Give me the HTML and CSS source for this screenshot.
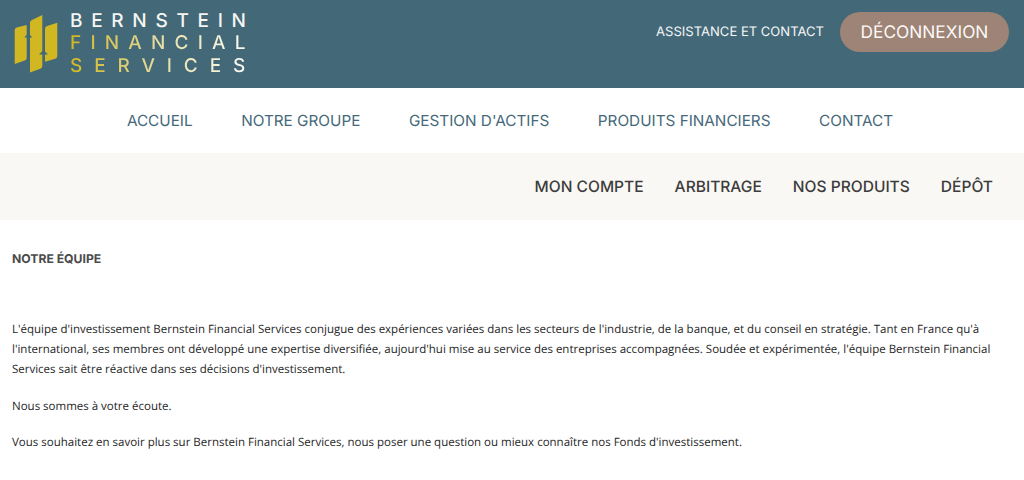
FILE: index.html
```html
<!DOCTYPE html>
<html lang="fr">
<head>
<meta charset="utf-8">
<title>Bernstein Financial Services</title>
<link rel="stylesheet" href="styles.css">
</head>
<body>
<header class="topbar">
  <a class="logo" href="#">
    <svg class="logo-mark" width="44" height="58" viewBox="0 0 44 58">
      <path class="bar" d="M.7 15 Q.7 13 2.700 12.400 L12.700 10 V43 Q12.700 45 10.700 45.600 L.7 49 Z"/>
      <path class="bar" d="M16 7.500 Q16 5.700 18 5 L28.300 0 V51 Q28.300 53 26.300 53.800 L16 57.500 Z"/>
      <path class="bar" d="M31 13.500 Q31 11.700 33 11 L43.300 7.700 V41 Q43.300 43 41.300 43.700 L31 46.700 Z"/>
      <path class="arrow" d="M14.300 18 L10.300 22.500 H18.300 Z"/>
      <path class="arrow" d="M29.500 35 L25 39.500 H34 Z"/>
    </svg>
    <span class="logo-text">
      <span class="logo-line logo-first">BERNSTEIN</span>
      <span class="logo-line logo-second">FINANCIAL</span>
      <span class="logo-line logo-third">SERVICES</span>
    </span>
  </a>
  <div class="top-actions">
    <a class="assist" href="#">ASSISTANCE ET CONTACT</a>
    <a class="logout" href="#">DÉCONNEXION</a>
  </div>
</header>
<nav class="mainnav">
  <a href="#">ACCUEIL</a>
  <a href="#">NOTRE GROUPE</a>
  <a href="#">GESTION D'ACTIFS</a>
  <a href="#">PRODUITS FINANCIERS</a>
  <a href="#">CONTACT</a>
</nav>
<nav class="subnav">
  <a href="#">MON COMPTE</a>
  <a href="#">ARBITRAGE</a>
  <a href="#">NOS PRODUITS</a>
  <a href="#">DÉPÔT</a>
</nav>
<main class="content">
  <h1>NOTRE ÉQUIPE</h1>
  <p>L'équipe d'investissement Bernstein Financial Services conjugue des expériences variées dans les secteurs de l'industrie, de la banque, et du conseil en stratégie. Tant en France qu'à l'international, ses membres ont développé une expertise diversifiée, aujourd'hui mise au service des entreprises accompagnées. Soudée et expérimentée, l'équipe Bernstein Financial Services sait être réactive dans ses décisions d'investissement.</p>
  <p>Nous sommes à votre écoute.</p>
  <p>Vous souhaitez en savoir plus sur Bernstein Financial Services, nous poser une question ou mieux connaître nos Fonds d'investissement.</p>
</main>
</body>
</html>
```

FILE: styles.css
```css
* { box-sizing: border-box; }
html, body { margin: 0; padding: 0; }
body { background: #fff; font-family: "Open Sans", "Noto Sans", sans-serif; color: #2e2e2e; overflow: hidden; text-rendering: geometricPrecision; }
a { text-decoration: none; color: inherit; }

.topbar {
  height: 88px;
  background: #436878;
  display: flex;
  justify-content: space-between;
  align-items: flex-start;
  padding: 12px 15px 0 14px;
}
.logo { display: flex; align-items: flex-start; gap: 12px; }
.logo-mark { margin-top: 3px; }
.bar { fill: #d1b722; }
.arrow { fill: #436878; }
.logo-text { display: flex; flex-direction: column; font-family: "Inter", sans-serif; font-size: 19px; line-height: 22.500px; font-weight: 500; color: #f6f6f2; margin-top: -2.500px; }
.logo-line { white-space: nowrap; }
.logo-first { letter-spacing: 8.700px; }
.logo-second, .logo-third {
  background: linear-gradient(90deg, #d1b722 0%, #e6dfa8 50%, #ffffff 100%);
  -webkit-background-clip: text;
  background-clip: text;
  color: transparent;
}
.logo-second { letter-spacing: 9.200px; }
.logo-third { letter-spacing: 11.900px; }
.top-actions { display: flex; align-items: center; gap: 16px; height: 40px; }
.assist { font-family: "Inter", sans-serif; font-size: 13.050px; color: #f4f6f6; }
.logout {
  font-family: "Inter", sans-serif;
  width: 169px;
  height: 40px;
  border-radius: 20px;
  background: #9e8476;
  color: #fbf9f7;
  font-size: 17.300px;
  display: flex;
  align-items: center;
  justify-content: center;
}

.mainnav {
  height: 65px;
  background: #fff;
  display: flex;
  justify-content: center;
  align-items: center;
  gap: 48.500px;
  padding-right: 4px;
  font-family: "Inter", sans-serif;
  font-size: 15.300px;
  color: #46697a;
}
.subnav {
  height: 67px;
  background: #faf8f5;
  display: flex;
  justify-content: flex-end;
  align-items: center;
  gap: 31px;
  padding-right: 31px;
  font-family: "Inter", sans-serif;
  font-size: 15.550px;
  font-weight: 500;
  color: #3c3c3c;
}

.content { padding: 31px 12px 0; }
.content h1 {
  margin: 0 0 53px;
  font-family: "Inter", sans-serif;
  font-size: 12.200px;
  line-height: 16px;
  font-weight: 700;
  color: #4a4a4a;
}
.content p {
  margin: 0 0 16.500px;
  font-size: 11.500px;
  line-height: 20px;
  color: #1f1f1f;
}
```
